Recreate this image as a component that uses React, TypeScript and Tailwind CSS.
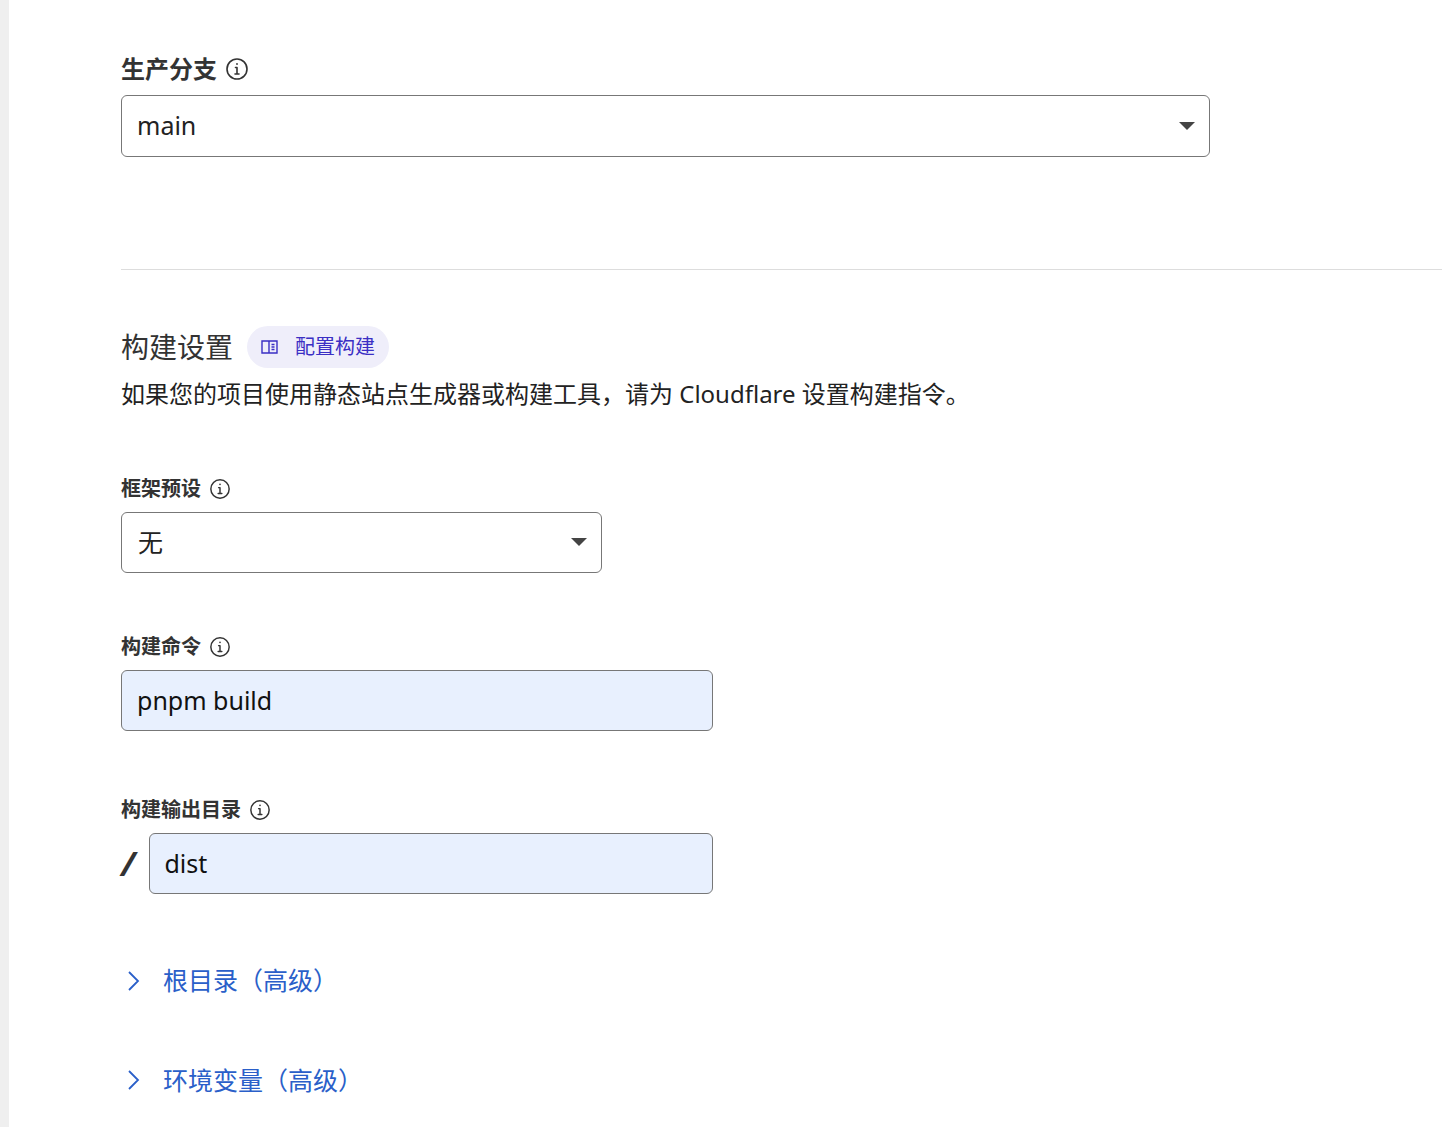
const font = { fontFamily: '"Noto Sans", "Noto Sans CJK SC", sans-serif' };

const Info = ({ size = 22 }: { size?: number }) => (
  <svg width={size} height={size} viewBox="0 0 24 24" fill="none" stroke="#333" strokeWidth="1.6">
    <circle cx="12" cy="12" r="10" />
    <path d="M12 10.5v6.5M10 17h4M10.5 10.5H12" strokeLinecap="round" />
    <circle cx="12" cy="7" r="0.9" fill="#333" stroke="none" />
  </svg>
);

const Caret = () => (
  <svg width="16" height="9" viewBox="0 0 16 9"><path d="M0 0h16L8 8z" fill="#444" /></svg>
);

const Chevron = () => (
  <svg width="14" height="24" viewBox="0 0 14 24" fill="none" stroke="#2a5fc9" strokeWidth="1.8">
    <path d="M2 3l9 9-9 9" />
  </svg>
);

const Label = ({ text, big }: { text: string; big?: boolean }) => (
  <div className={`flex items-center gap-2 font-bold text-[#333] ${big ? 'text-[24px]' : 'text-[20px]'}`}>
    <span>{text}</span>
    <Info size={big ? 24 : 22} />
  </div>
);

export default function App() {
  return (
    <div className="flex min-h-[1127px] bg-white" style={font}>
      <div className="w-[9px] shrink-0 bg-[#efefef]" />
      <div className="flex-1 pl-[112px] pt-[51px]">
        <Label text="生产分支" big />
        <div className="mt-[8px] flex h-[62px] w-[1089px] items-center justify-between rounded-md border border-[#777] pl-[15px] pr-[14px] text-[25px] text-[#222]">
          <span>main</span>
          <Caret />
        </div>
        <div className="mt-[112px] h-px bg-[#ddd]" />
        <div className="mt-[56px] flex items-center gap-[14px]">
          <span className="text-[28px] text-[#333]">构建设置</span>
          <div className="flex h-[42px] items-center gap-[16px] rounded-full bg-[#efeefa] px-[14px] text-[20px] text-[#3b2fc4]">
            <svg width="18" height="16" viewBox="0 0 18 16" fill="none" stroke="#3b2fc4" strokeWidth="1.4">
              <path d="M1 2h7v12H1zM8 2h8v12H8zM10.5 5.5h3M10.5 8h3M10.5 10.5h3" />
            </svg>
            <span>配置构建</span>
          </div>
        </div>
        <p className="mt-[8px] text-[24px] text-[#222]">如果您的项目使用静态站点生成器或构建工具，请为 Cloudflare 设置构建指令。</p>

        <div className="mt-[62px]"><Label text="框架预设" /></div>
        <div className="mt-[8px] flex h-[61px] w-[481px] items-center justify-between rounded-md border border-[#777] pl-[16px] pr-[14px] text-[25px] text-[#222]">
          <span>无</span>
          <Caret />
        </div>

        <div className="mt-[59px]"><Label text="构建命令" /></div>
        <div className="mt-[8px] flex h-[61px] w-[592px] items-center rounded-md border border-[#777] bg-[#e8f0fe] pl-[15px] text-[25px] text-[#111]">
          pnpm build
        </div>

        <div className="mt-[64px]"><Label text="构建输出目录" /></div>
        <div className="mt-[8px] flex w-[592px] items-center gap-[14px]">
          <span className="text-[34px] font-bold italic text-[#333]">/</span>
          <div className="flex h-[61px] flex-1 items-center rounded-md border border-[#777] bg-[#e8f0fe] pl-[14px] text-[25px] text-[#111]">dist</div>
        </div>

        <div className="mt-[68px] flex items-center gap-[22px] pl-[6px] text-[25px] text-[#2a5fc9]">
          <Chevron /><span>根目录（高级）</span>
        </div>
        <div className="mt-[62px] flex items-center gap-[22px] pl-[6px] text-[25px] text-[#2a5fc9]">
          <Chevron /><span>环境变量（高级）</span>
        </div>
      </div>
    </div>
  );
}
